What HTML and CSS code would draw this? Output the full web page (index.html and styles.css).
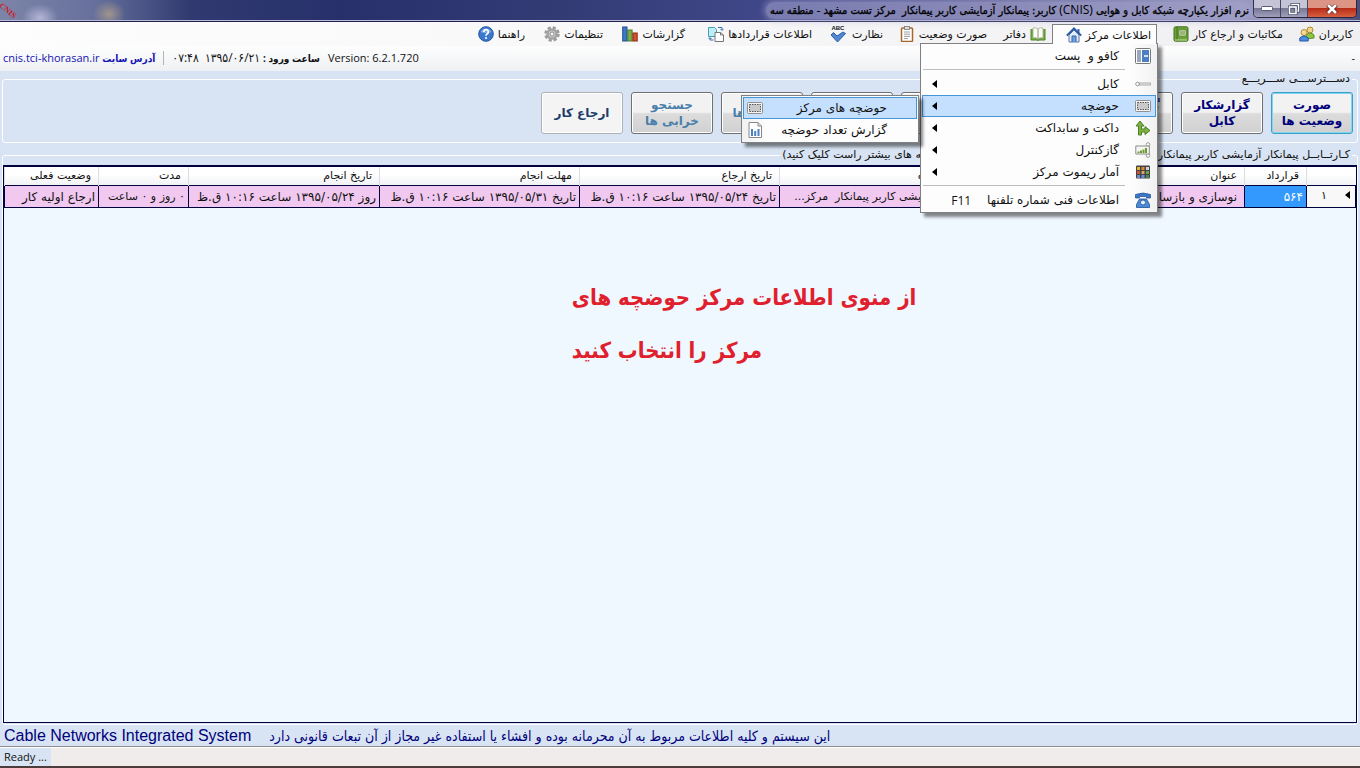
FILE: index.html
```
<!DOCTYPE html>
<html lang="fa" dir="rtl">
<head>
<meta charset="utf-8">
<title>CNIS</title>
<link rel="stylesheet" href="styles.css">
</head>
<body>
<header class="titlebar">
  <div class="window-controls">
    <button class="wc wc-close" type="button" aria-label="Close"><svg width="12" height="10" viewBox="0 0 12 10"><path d="M1.500 1L10.500 9M10.500 1L1.500 9" stroke="#5a2020" stroke-width="4"/><path d="M2 1L10 9M10 1L2 9" stroke="#fff" stroke-width="2.600"/></svg></button>
    <button class="wc wc-restore" type="button" aria-label="Restore"><svg width="12" height="12" viewBox="0 0 12 12" fill="none"><path d="M4 3V1.500H10.500V8H9" stroke="#444a66" stroke-width="3"/><path d="M4 2.500V1.500H10.500V8H9" stroke="#fff" stroke-width="1.500"/><rect x="1.500" y="4" width="6.500" height="6.500" stroke="#444a66" stroke-width="3"/><rect x="1.500" y="4" width="6.500" height="6.500" stroke="#fff" stroke-width="1.600"/></svg></button>
    <button class="wc wc-min" type="button" aria-label="Minimize"><svg width="12" height="5" viewBox="0 0 12 5"><rect x=".5" y=".5" width="11" height="4" rx="1" fill="#fff" stroke="#555b78"/></svg></button>
  </div>
  <h1 class="title">نرم افزار یکپارچه شبکه کابل و هوایی <span class="title-latin">(CNIS)</span> کاربر: پیمانکار آزمایشی کاربر پیمانکار&nbsp; مرکز تست مشهد - منطقه سه</h1>
  <span class="brand" dir="ltr">CNIS</span>
</header>

<nav class="menubar">
  <button class="menu" type="button">کاربران
    <svg class="ic" viewBox="0 0 16 16"><circle cx="11" cy="4" r="3" fill="#f2d488" stroke="#b08a30"/><path d="M7 13V9q4-4 8 0v3z" fill="#8cc63e" stroke="#5d8f25"/><circle cx="5" cy="6.500" r="3" fill="#f5d998" stroke="#b98c35"/><path d="M.8 15v-3q4-4 8.400 0v3z" fill="#4b8be0" stroke="#2458a8"/></svg>
  </button>
  <button class="menu" type="button">مکاتبات و ارجاع کار
    <svg class="ic" viewBox="0 0 16 16"><rect x="1" y=".8" width="14" height="14.400" rx="1.500" fill="#6ea23a" stroke="#3f701c"/><path d="M4 1v14" stroke="#3f701c"/><rect x="6" y="4" width="7" height="6" fill="#e8f2d2" stroke="#4b7c22" stroke-width=".7"/><path d="M7 6h5M7 8h5" stroke="#4b7c22"/><path d="M2 14h12" stroke="#c7e09c"/></svg>
  </button>
  <div class="menu-open">
    <button class="menu" type="button" aria-expanded="true">اطلاعات مرکز
      <svg class="ic" viewBox="0 0 16 16"><path d="M3 8v7h10V8L8 3z" fill="#e3ecf8" stroke="#5575a8"/><path d="M11.500 2h2v4h-2z" fill="#3c68ae"/><path d="M.8 8.600L8 1.500l7.200 7.100" fill="none" stroke="#2d5ca8" stroke-width="2"/><path d="M6 15V9h4v6" fill="#6aa0de" stroke="#35629f"/></svg>
    </button>
    <div class="dropdown" role="menu">
      <button class="item" role="menuitem" type="button"><svg class="ic" viewBox="0 0 16 16"><rect x=".5" y=".5" width="15" height="15" rx="1" fill="#fff" stroke="#777"/><path d="M2 2h4v12H2z" fill="#9aa7ba"/><path d="M7 2h7v12H7z" fill="#4b7fc4"/><path d="M9 8h4" stroke="#fff" stroke-width="1.500"/></svg><span>کافو و&nbsp; پست</span></button>
      <hr class="sep">
      <button class="item" role="menuitem" type="button"><svg class="ic" viewBox="0 0 16 16"><circle cx="2.500" cy="8" r="1.800" fill="#fff" stroke="#999"/><rect x="4.500" y="7" width="11" height="2" fill="#eee" stroke="#999" stroke-width=".8"/></svg><span>کابل</span><i class="arrow"></i></button>
      <div class="sub-open">
        <button class="item selected" role="menuitem" type="button" aria-expanded="true"><svg class="ic" viewBox="0 0 16 16"><rect x=".5" y="2.500" width="15" height="11" rx="1" fill="#f4f4f4" stroke="#909090"/><rect x="2.500" y="4.500" width="11" height="7" fill="#c9c9c9" stroke="#555" stroke-dasharray="1.500 1"/></svg><span>حوضچه</span><i class="arrow"></i></button>
        <div class="submenu" role="menu">
          <button class="subitem selected" role="menuitem" type="button"><span>حوضچه های مرکز</span><svg class="ic" viewBox="0 0 16 16"><rect x=".5" y="2.500" width="15" height="11" rx="1" fill="#f4f4f4" stroke="#909090"/><rect x="2.500" y="4.500" width="11" height="7" fill="#c9c9c9" stroke="#555" stroke-dasharray="1.500 1"/></svg></button>
          <button class="subitem" role="menuitem" type="button"><span>گزارش تعداد حوضچه</span><svg class="ic" viewBox="0 0 16 16"><path d="M2 .5h9l3.500 3.500v11.500H2z" fill="#fff" stroke="#888"/><path d="M11 .5V4h3.500" fill="#ddd" stroke="#888"/><path d="M5 7v7M8.200 9v5M11.500 7v7" stroke="#4a7fc4" stroke-width="2"/></svg></button>
        </div>
      </div>
      <button class="item" role="menuitem" type="button"><svg class="ic" viewBox="0 0 16 16"><path d="M3.500 15V6H1L5 1l4 5H6.500v3H10V6.500l5 4-5 4V12H6.500v3z" fill="#7cb342" stroke="#4c7d22"/></svg><span>داکت و سابداکت</span><i class="arrow"></i></button>
      <button class="item" role="menuitem" type="button"><svg class="ic" viewBox="0 0 16 16"><circle cx="13" cy="2.500" r="1.800" fill="#fff" stroke="#999"/><circle cx="13" cy="13.500" r="1.800" fill="#fff" stroke="#999"/><path d="M.8 4h13.500v8H.8z" fill="#f6f6f2" stroke="#8c8c88"/><path d="M3.500 11V9.500M6 11V8.500M8.500 11V7.500M11 11V6" stroke="#6a9c35" stroke-width="2"/></svg><span>گازکنترل</span><i class="arrow"></i></button>
      <button class="item" role="menuitem" type="button"><svg class="ic" viewBox="0 0 16 16"><rect x="1" y="1.500" width="14" height="13" rx="1" fill="#444"/><path d="M2 3h3v3H2z" fill="#e8b730"/><path d="M6.500 3h3v3h-3z" fill="#e08a2a"/><path d="M11 3h3v3h-3z" fill="#c9d5e4"/><path d="M2 7h3v3H2z" fill="#c8523a"/><path d="M6.500 7h3v3h-3z" fill="#d9a66a"/><path d="M11 7h3v3h-3z" fill="#6aa54a"/><path d="M2 11h3v3H2z" fill="#7285c8"/><path d="M6.500 11h3v3h-3z" fill="#6a8fd8"/><path d="M11 11h3v3h-3z" fill="#4a8a5a"/></svg><span>آمار ریموت مرکز</span><i class="arrow"></i></button>
      <hr class="sep">
      <button class="item" role="menuitem" type="button"><svg class="ic" viewBox="0 0 16 16"><path d="M.5 6V2.500q7.500-3 15 0V6h-4V4.500h-7V6z" fill="#3c78c8" stroke="#1f4f94" stroke-width=".7"/><path d="M1.500 15.500v-3l3-5.500h7l3 5.500v3z" fill="#4b8ada" stroke="#1f4f94" stroke-width=".8"/><circle cx="8" cy="10.500" r="2.500" fill="#e8f1fc" stroke="#1f4f94" stroke-width=".8"/></svg><span>اطلاعات فنی شماره تلفنها</span><kbd>F11</kbd></button>
    </div>
  </div>
  <button class="menu" type="button"><svg class="ic" viewBox="0 0 16 16"><path d="M1 3v11h6q1 1 2 0h6V3" fill="#7cb04a" stroke="#4f8228"/><path d="M3 2q3-1 5 1 2-2 5-1v10q-3-1-5 1-2-2-5-1z" fill="#fdfdf8" stroke="#8fa27a" stroke-width=".7"/><path d="M8 3v10" stroke="#90907c"/></svg>دفاتر</button>
  <button class="menu" type="button">صورت وضعیت
    <svg class="ic" viewBox="0 0 16 16"><rect x="2.500" y="2" width="11" height="13.500" rx="1" fill="#fff" stroke="#a4682c" stroke-width="1.500"/><rect x="5.500" y=".5" width="5" height="3" fill="#ddd" stroke="#777" stroke-width=".8"/><path d="M5 6h6M5 8.200h6M5 10.400h6M5 12.600h4" stroke="#9a9a9a"/></svg>
  </button>
  <button class="menu" type="button">نظارت
    <span class="abc"><b>ABC</b><svg width="16" height="12" viewBox="0 0 16 12"><path d="M1 4l2.500-2.500L7 5l6-4 2.500 1.500L7.500 11z" fill="#4f87d0" stroke="#2c5ea6"/></svg></span>
  </button>
  <button class="menu" type="button">اطلاعات قراردادها
    <svg class="ic" viewBox="0 0 16 16"><path d="M.5 1.500h6l2 2v7h-8z" fill="#bdeef5" stroke="#45a0b8"/><path d="M7 6.500h5.500l3 2.500v6.500H7z" fill="#fff" stroke="#777"/><path d="M12.500 6.500V9h3" fill="none" stroke="#777"/><path d="M10 1.500h4V4M12.500 3L14 4.500 15.500 3M5.500 14H2v-2M.5 13L2 11.500 3.500 13" fill="none" stroke="#3d6fae"/></svg>
  </button>
  <button class="menu" type="button">گزارشات
    <svg class="ic" viewBox="0 0 16 16"><rect x=".7" y="1" width="4.300" height="14" fill="#3d78c6" stroke="#214f92"/><rect x="5.800" y="4" width="4.300" height="11" fill="#79ae48" stroke="#4d7d25"/><rect x="10.900" y="7" width="4.300" height="8" fill="#d2502c" stroke="#8d2c14"/></svg>
  </button>
  <button class="menu" type="button">تنظیمات
    <svg class="ic" viewBox="0 0 16 16"><circle cx="8" cy="8" r="6.500" fill="none" stroke="#9a9a9a" stroke-width="2.500" stroke-dasharray="3.100 2"/><circle cx="8" cy="8" r="4.600" fill="#cfcfcf" stroke="#a2a2a2" stroke-width="2.500"/><circle cx="8" cy="8" r="2" fill="#fafafa" stroke="#8c8c8c"/></svg>
  </button>
  <button class="menu" type="button">راهنما
    <svg class="ic" viewBox="0 0 16 16"><circle cx="8" cy="8" r="7.300" fill="#3b78cc" stroke="#2355a0"/><path d="M2.500 6a6 6 0 0 1 11 0q-5 2.500-11 0" fill="#79a9e6"/><path d="M5.800 6q0-2.300 2.300-2.300T10.300 6q0 1.200-1.200 1.900Q8 8.600 8 9.700" fill="none" stroke="#fff" stroke-width="1.700"/><circle cx="8" cy="12" r="1.100" fill="#fff"/></svg>
  </button>
</nav>

<div class="infobar">
  <span>-</span>
  <div class="info" dir="ltr">
    <a class="site" href="#">cnis.tci-khorasan.ir <b dir="rtl">آدرس سایت</b></a>
    <span class="login" dir="rtl"><b>ساعت ورود :</b> <span class="stamp">۱۳۹۵/۰۶/۲۱&nbsp; ۰۷:۴۸</span></span>
    <span>Version: 6.2.1.720</span>
  </div>
</div>

<main class="workspace">
  <fieldset class="group">
    <legend>دســـترســـی ســـریـــع</legend>
    <div class="toolbar">
      <div class="tools">
        <button class="tool focus" type="button">صورت<br>وضعیت ها</button>
        <button class="tool" type="button">گزارشکار<br>کابل</button>
        <button class="tool" type="button">گزارشکار<br>کافو</button>
      </div>
      <div class="tools">
        <button class="tool" type="button">کافو</button>
        <button class="tool" type="button">پست</button>
        <button class="tool" type="button">کابل</button>
        <button class="tool soft" type="button">گزارش ها</button>
        <button class="tool soft" type="button">جستجو<br>خرابی ها</button>
        <button class="tool flat" type="button">ارجاع کار</button>
      </div>
    </div>
  </fieldset>

  <fieldset class="group cartable">
    <legend>کـارتــابــل پیمانکار آزمایشی کاربر پیمانکار&nbsp; مرکز تست مشهد - منطقه سه (برای مشاهده گزینه های بیشتر راست کلیک کنید)</legend>
    <div class="grid">
      <table>
        <colgroup><col class="c-head"><col class="c-no"><col><col class="c-date"><col class="c-date"><col class="c-date"><col class="c-done"><col class="c-span"><col class="c-state"></colgroup>
        <thead>
          <tr><th></th><th>قرارداد</th><th>عنوان</th><th>ارجاع دهنده</th><th>تاریخ ارجاع</th><th>مهلت انجام</th><th>تاریخ انجام</th><th>مدت</th><th>وضعیت فعلی</th></tr>
        </thead>
        <tbody>
          <tr><td class="rowhead"><i class="arrow"></i>۱</td><td class="current">۵۶۴</td><td>نوسازی و بازسازی شبکه کابل</td><td class="small">پیمانکار آزمایشی کاربر پیمانکار&nbsp; مرکز...</td><td>تاریخ ۱۳۹۵/۰۵/۲۴ ساعت ۱۰:۱۶ ق.ظ</td><td>تاریخ ۱۳۹۵/۰۵/۳۱ ساعت ۱۰:۱۶ ق.ظ</td><td>روز ۱۳۹۵/۰۵/۲۴ ساعت ۱۰:۱۶ ق.ظ</td><td class="small">۰ روز و ۰ ساعت</td><td>ارجاع اولیه کار</td></tr>
        </tbody>
      </table>
      <p class="note">از منوی اطلاعات مرکز حوضچه های<br>مرکز را انتخاب کنید</p>
    </div>
  </fieldset>
</main>

<div class="notice" dir="ltr">
  <span>Cable Networks Integrated System</span>
  <span class="legal" dir="rtl">این سیستم و کلیه اطلاعات مربوط به آن محرمانه بوده و افشاء یا استفاده غیر مجاز از آن تبعات قانونی دارد</span>
</div>
<footer class="statusbar" dir="ltr"><span class="ready">Ready ...</span></footer>
</body>
</html>
```

FILE: styles.css
```
* { box-sizing: border-box; }
body {
  margin: 0;
  height: 100vh;
  display: flex;
  flex-direction: column;
  overflow: hidden;
  background: #d8e4f3;
  color: #111;
  font-family: "DejaVu Sans", sans-serif;
  font-size: 11px;
}
button { margin: 0; padding: 0; border: 0; background: none; color: inherit; font: inherit; }
.ic { width: 16px; height: 16px; flex: none; }

/* Title bar */
.titlebar {
  position: relative;
  display: flex;
  height: 22px;
  padding-right: 3px;
  gap: 3px;
  border-bottom: 1px solid #20204a;
  box-shadow: inset 0 -1px #b9bbd8;
  background:
    radial-gradient(ellipse 18px 14px at 40px 18px, #c4c4e4cc, transparent),
    radial-gradient(ellipse 16px 14px at 109px 14px, #b0a08ccc, transparent),
    linear-gradient(90deg, #7c84a8 0, #66709c 7%, #303a70 14%, #27306a 25%, #343c76 42%, #41488a 57%, #6c6ca0 75%, #9c9cc4 94%, #4c4c78 100%);
}
.window-controls { display: flex; flex: none; height: 18px; border: 1px solid #26263e; border-top: 0; border-radius: 0 0 5px 5px; overflow: hidden; }
.wc { display: flex; align-items: center; justify-content: center; width: 27px; background: linear-gradient(#c4c4d6 45%, #787894 50%, #a0a0bc); border-right: 1px solid #45455f; }
.wc-close { width: 48px; background: linear-gradient(#dc9484 45%, #b82c18 50%, #d86040); border: 0; }
.title { margin: 0; padding: 0 1px 0 4px; border-radius: 8px; background: #a4a4ce90; box-shadow: 0 0 6px 2px #a4a4ce90; align-self: center; font-size: 11px; line-height: 16px; font-weight: normal; white-space: nowrap; font-family: "DejaVu Sans Condensed", "DejaVu Sans", sans-serif; color: #000; -webkit-text-stroke: 0.3px #000; }
.title-latin { -webkit-text-stroke: 0; font-size: 12px; font-family: "Open Sans", sans-serif; }
.brand { position: absolute; left: -2px; top: 6px; color: #d01822; font: bold 8px/10px "Liberation Serif", serif; transform: rotate(40deg); }

/* Menu bar */
.menubar {
  display: grid;
  grid-template-columns: 70px 132px 105px 59px 104px 71px 127px 82px 78px 70px;
  height: 24px;
  padding-right: 1px;
  background: linear-gradient(90deg, #fdfdfd, #f7f7f8 50%, #efeff2);
}
.menu { display: flex; align-items: center; gap: 4px; height: 24px; padding-right: 6px; white-space: nowrap; }
.abc { display: grid; justify-items: center; line-height: 5px; direction: ltr; margin-right: 2px; }
.abc b { font: bold 6px/5px "Liberation Sans", sans-serif; }
.menu-open { position: relative; z-index: 2; height: 22px; margin-top: 2px; border: 1px solid #808080; border-bottom: 0; background: #fdfdfd; }
.menu-open > .menu { height: 20px; padding-right: 5px; }
.dropdown { position: absolute; top: 18px; right: -2px; width: 238px; padding: 1px; border: 1px solid #808080; background: linear-gradient(90deg, #fdfdfd 210px, #f1f1f1); box-shadow: 4px 4px 3px #0007; font-size: 12px; }
.dropdown::before { content: ""; position: absolute; top: -1px; right: 1px; width: 103px; height: 1px; background: #fdfdfd; }
.item { display: flex; align-items: center; width: 100%; height: 22px; padding: 0 4px 0 9px; gap: 16px; border: 1px solid transparent; white-space: nowrap; }
.item .arrow { margin-right: auto; }
.item kbd { font: 12px "Open Sans", sans-serif; }
.selected { border: 1px solid #4596d6; background: #c4e0fe; }
.arrow { flex: none; border: 4px solid transparent; border-left: 0; border-right: 5px solid #000; }
.sep { height: 1px; margin: 2px 31px 3px 1px; border: 0; background: #bcbcbc; }
.sub-open { position: relative; }
.submenu { position: absolute; top: 0; right: 100%; width: 178px; margin-right: 3px; padding: 1px; border: 1px solid #808080; background: linear-gradient(90deg, #f1f1f1, #fdfdfd 26px); box-shadow: 4px 4px 3px #0007; }
.subitem { display: flex; align-items: center; justify-content: space-between; width: 100%; height: 22px; padding: 0 29px 0 3px; border: 1px solid transparent; white-space: nowrap; }
.subitem.selected { border-color: #4596d6; }

/* Session information */
.infobar { display: flex; justify-content: space-between; align-items: center; height: 25px; padding: 0 5px 2px 3px; background: linear-gradient(#fefefe, #eef0f3); font-family: "Open Sans", "DejaVu Sans Condensed", sans-serif; }
.info { display: flex; align-items: center; gap: 8px; font-size: 11px; white-space: nowrap; }
.info b { font-size: 10px; }
.stamp { font-size: 12px; }
.site { padding-right: 8px; border-right: 1px solid #b4b4b4; line-height: 14px; color: #1414b4; text-decoration: none; }

/* Workspace */
.workspace { display: flex; flex: 1; flex-direction: column; min-height: 0; padding: 1px 2px 0; gap: 4px; }
.group { min-width: 0; margin: 0; padding: 6px 4px 8px; border: 1px solid #fff; border-radius: 3px; }
.group legend { margin: 0 1px; padding: 0 2px; line-height: 14px; white-space: nowrap; }
.toolbar, .tools { display: flex; gap: 8px; }
.toolbar { gap: 18px; }
.tool { width: 82px; height: 42px; border: 1px solid #707070; border-radius: 3px; background: linear-gradient(#f2f2f2 48%, #dcdcdc 52%, #d0d0d0); box-shadow: inset 0 0 0 1px #fff; color: #00007a; font-weight: bold; font-size: 12px; line-height: 16px; white-space: nowrap; }
.tool.focus { border-color: #3c9fc4; box-shadow: inset 0 0 0 1px #7fd6f2; }
.tool.soft { color: #4a7fac; }
.tool.flat { border-color: #adb2b5; background: #f4f4f4; color: #1c3c6c; }
.cartable { flex: 1; min-height: 0; padding: 2px 0 1px; }
.cartable legend { margin: 0 5px; line-height: 16px; }
.grid { height: 100%; border: 1px solid #00003c; border-top-width: 2px; background: #eff7ff; overflow: hidden; }
table { width: 100%; table-layout: fixed; border-collapse: collapse; }
.c-head { width: 49px; }
.c-no { width: 62px; }
.c-date { width: 200px; }
.c-done { width: 191px; }
.c-span { width: 90px; }
.c-state { width: 94px; }
th { height: 18px; padding: 0 7px; background: linear-gradient(#fff 40%, #f1f2f5); border-left: 1px solid #dcdde0; font-weight: normal; text-align: right; }
td { height: 22px; padding: 2px 3px 0; border: 1px solid #00003c; background: #f0c8f0; font-size: 12px; line-height: 16px; white-space: nowrap; overflow: hidden; }
td:nth-child(3) { padding-right: 7px; }
td.small { font-size: 11px; }
.rowhead { padding: 0 5px; background: #f8f8f8; font-size: 11px; }
.rowhead .arrow { display: inline-block; margin-left: 18px; }
.current { background: #3399ff; color: #fff; }
.note { direction: rtl; margin: 63px 0 0; padding-left: 42%; text-align: left; color: #e0202c; font: bold 22px/53px "DejaVu Sans Condensed", "DejaVu Sans", sans-serif; white-space: nowrap; }

/* Bottom bars */
.notice { display: flex; align-items: center; gap: 18px; height: 22px; padding-left: 4px; border-bottom: 1px solid #8c8c8c; color: #00007a; font: 16px "Liberation Sans", sans-serif; white-space: nowrap; }
.legal { font: 14px "DejaVu Sans Condensed", "DejaVu Sans", sans-serif; }
.statusbar { display: flex; height: 21px; border-top: 1px solid #fff; border-bottom: 2px solid #4c3c3c; background: #f0ecec; }
.ready { padding: 0 4px; background: #d8e4f3; font: 11px/18px "Open Sans", sans-serif; }
```
